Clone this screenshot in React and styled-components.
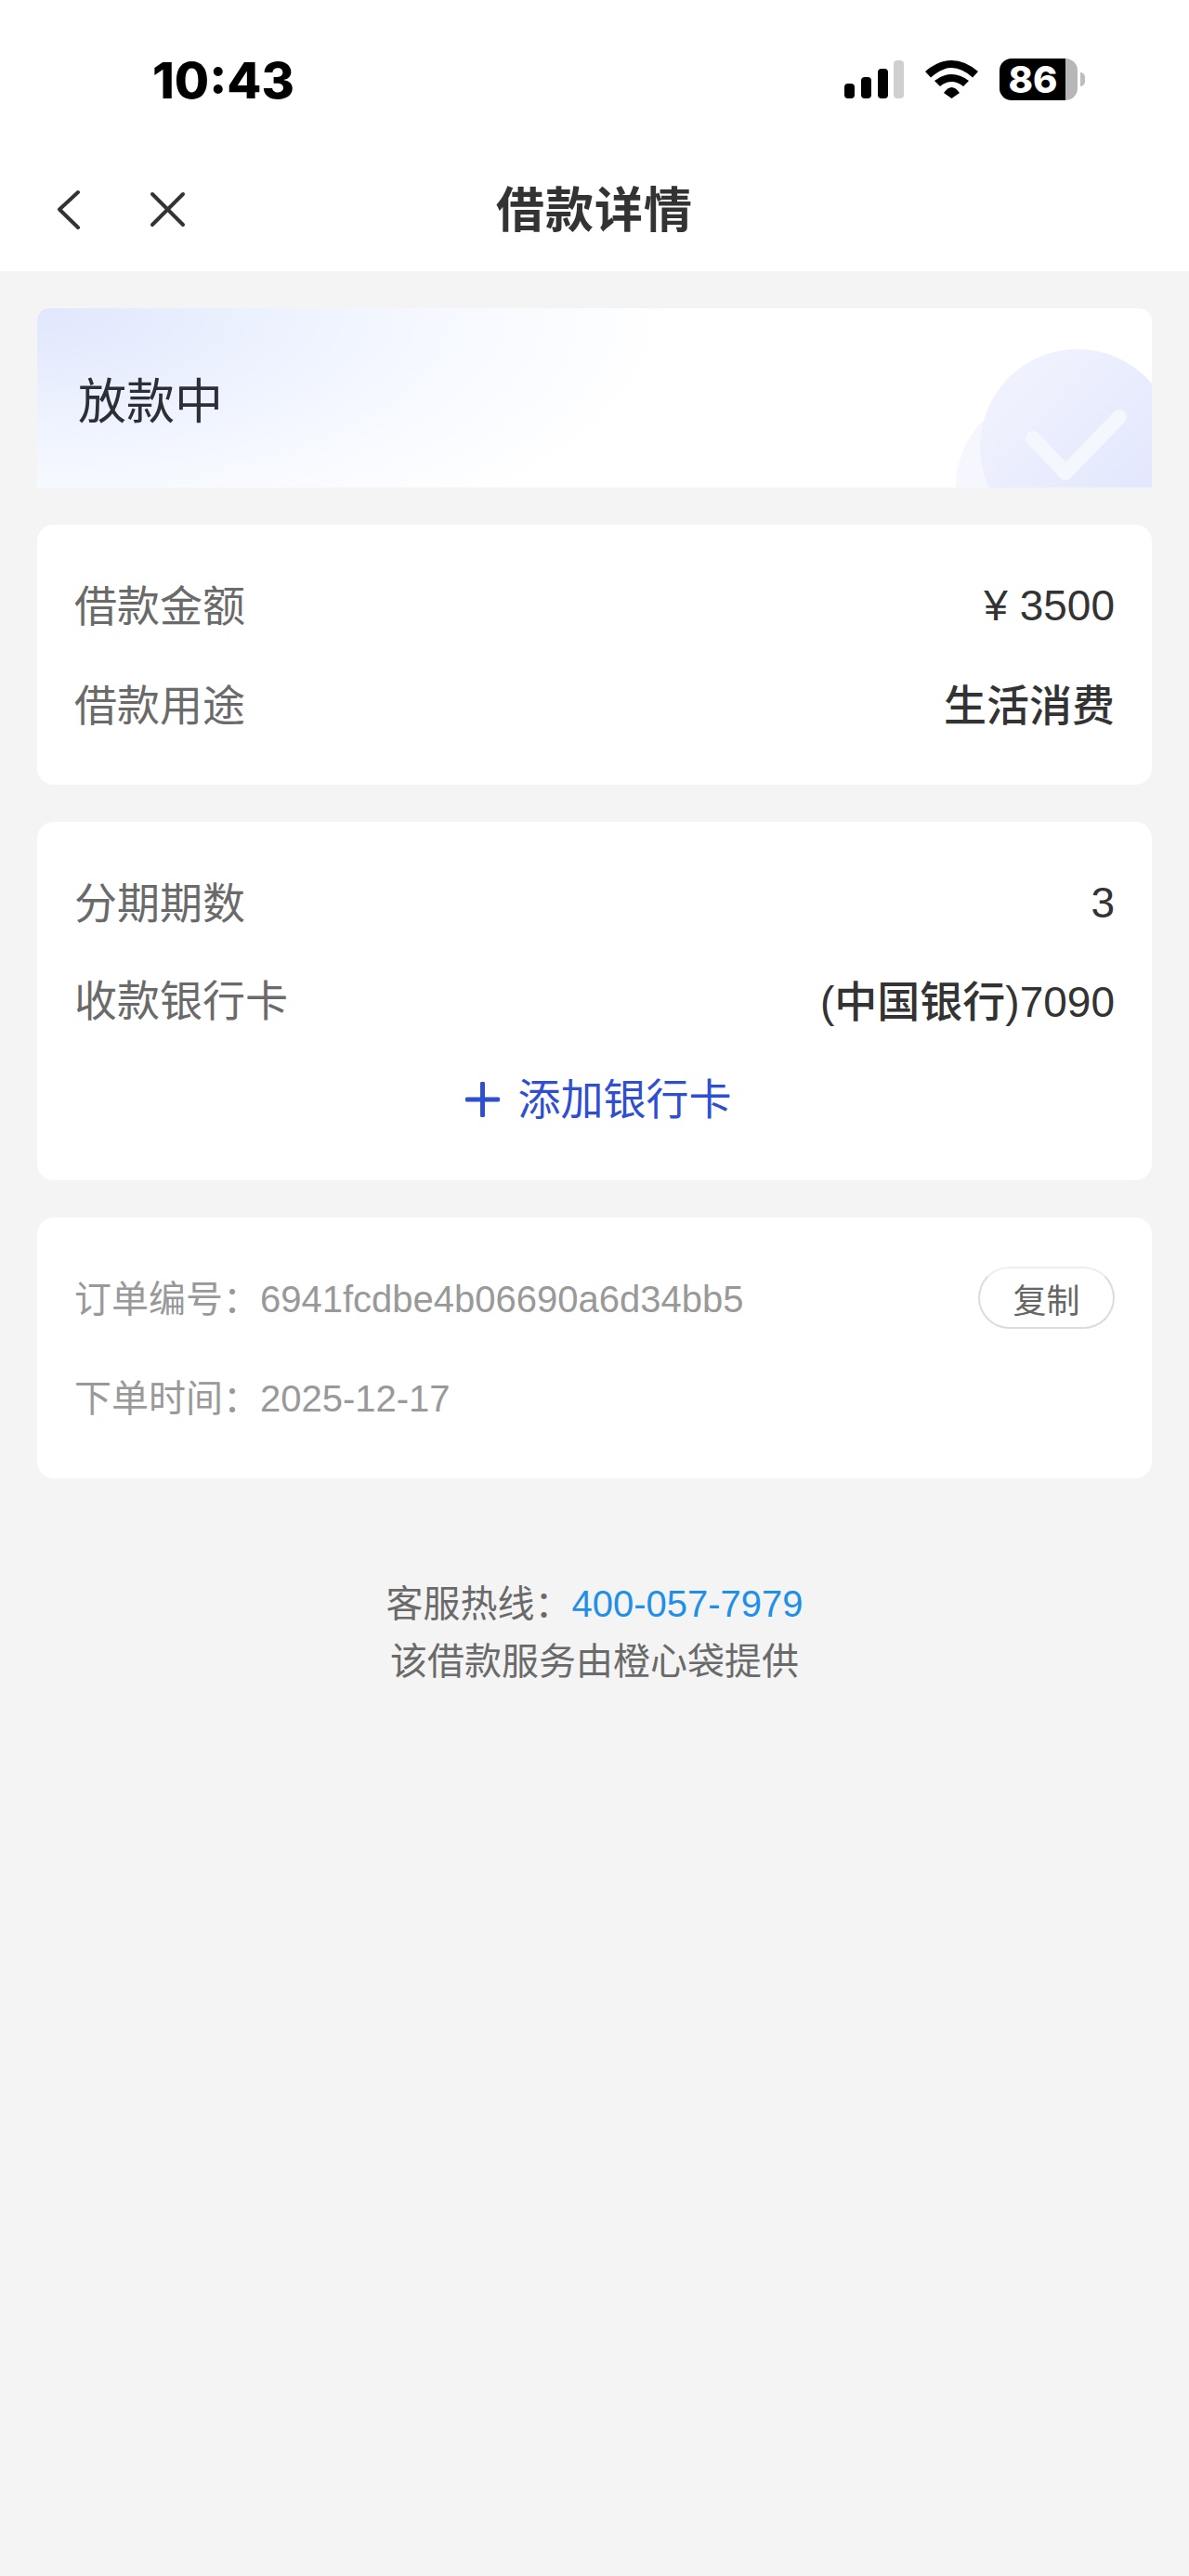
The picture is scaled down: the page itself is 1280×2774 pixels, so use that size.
import React from 'react';
import styled, { createGlobalStyle } from 'styled-components';

const GlobalStyle = createGlobalStyle`
  html, body {
    margin: 0;
    padding: 0;
    background: #f4f4f4;
  }
  body {
    font-family: "Liberation Sans", "Noto Sans CJK SC", sans-serif;
  }
`;

const Page = styled.div`
  width: 1280px;
  height: 2774px;
  background: #f4f4f4;
  overflow: hidden;
`;

const Header = styled.header`
  background: #fff;
  height: 292px;
`;

const StatusBar = styled.div`
  height: 170px;
  display: flex;
  justify-content: space-between;
  align-items: flex-start;
  padding: 57px 112px 0 164px;
  box-sizing: border-box;
`;

const Clock = styled.div`
  font-family: Inter, "Liberation Sans", sans-serif;
  font-size: 54px;
  line-height: 60px;
  font-weight: 800;
  color: #000;
`;

const StatusIcons = styled.div`
  display: flex;
  align-items: center;
  gap: 23px;
  padding-top: 6px;
`;

const Battery = styled.div`
  position: relative;
  width: 84px;
  height: 45px;
  margin-right: 8px;
  border-radius: 13px;
  background: linear-gradient(90deg, #000 0 85%, #b7b7b7 85% 100%);
  color: #fff;
  font-family: Inter, "Liberation Sans", sans-serif;
  font-size: 40px;
  line-height: 45px;
  font-weight: 800;
  text-align: center;
  padding-right: 12px;
  box-sizing: border-box;

  &::after {
    content: '';
    position: absolute;
    right: -8px;
    top: 15px;
    width: 5px;
    height: 15px;
    border-radius: 0 5px 5px 0;
    background: #bdbdbd;
  }
`;

const NavBar = styled.div`
  height: 122px;
  display: grid;
  grid-template-columns: 1fr auto 1fr;
  align-items: start;
  padding-left: 60px;
  padding-right: 60px;
`;

const NavButtons = styled.div`
  display: flex;
  align-items: center;
  gap: 73px;
  padding-top: 34px;
`;

const Title = styled.h1`
  margin: 0;
  font-family: "Noto Sans CJK SC", sans-serif;
  font-size: 52px;
  line-height: 106px;
  font-weight: 700;
  color: #333;
  letter-spacing: 1px;
`;

const Content = styled.main`
  padding: 40px 40px 0;
  display: flex;
  flex-direction: column;
  gap: 40px;
`;

const StatusCard = styled.section`
  position: relative;
  height: 193px;
  border-radius: 14px 14px 0 0;
  overflow: hidden;
  display: flex;
  align-items: center;
  padding: 0 44px;
  background:
    radial-gradient(ellipse 680px 290px at 0 0, #e0e7fd 0%, #ebf0fe 32%, #f5f8ff 62%, rgba(255, 255, 255, 0) 100%),
    #fff;
  box-sizing: border-box;
`;

const StatusText = styled.div`
  font-family: "Noto Sans CJK SC", sans-serif;
  font-size: 52px;
  line-height: 70px;
  color: #2c2f36;
`;

const CheckBadge = styled.svg`
  position: absolute;
  right: 0;
  bottom: 0;
`;

const Card = styled.section`
  background: #fff;
  border-radius: 18px;
  padding: ${(p) => p.$padding};
  box-sizing: border-box;
  height: ${(p) => p.$height}px;
`;

const Row = styled.div`
  height: ${(p) => p.$height}px;
  display: flex;
  align-items: center;
  justify-content: space-between;
`;

const Label = styled.span`
  font-family: "Noto Sans CJK SC", sans-serif;
  font-size: 46px;
  color: #6a6a6a;
  padding-bottom: 6px;
`;

const Value = styled.span`
  font-size: 46px;
  color: #333;
  padding-bottom: ${(p) => p.$lift || 0}px;
`;

const Cjk = styled.span`
  font-family: "Noto Sans CJK SC", sans-serif;
  font-weight: 500;
`;

const AddRow = styled.div`
  height: 109px;
  display: flex;
  align-items: center;
  justify-content: center;
  gap: 20px;
  padding-left: 8px;
`;

const AddLabel = styled.span`
  font-family: "Noto Sans CJK SC", sans-serif;
  font-size: 46px;
  color: #2f4fd0;
  padding-bottom: 8px;
`;

const OrderRow = styled.div`
  height: 107px;
  display: flex;
  align-items: center;
  justify-content: space-between;
`;

const OrderText = styled.span`
  font-size: 40px;
  color: #999;
  font-family: "Noto Sans CJK SC", sans-serif;

  & > b {
    font-family: "Liberation Sans", sans-serif;
    font-weight: 400;
  }
`;

const CopyButton = styled.button`
  width: 147px;
  height: 67px;
  margin-top: 4px;
  border: 2px solid #dcdcdc;
  border-top-color: #eeeeee;
  border-radius: 34px;
  background: #fff;
  font-family: "Noto Sans CJK SC", sans-serif;
  font-size: 36px;
  color: #666;
  padding: 0;
`;

const Footer = styled.footer`
  margin-top: 103px;
  text-align: center;
  font-family: "Noto Sans CJK SC", sans-serif;
  font-size: 40px;
  line-height: 59px;
  color: #6a6a6a;
`;

const Phone = styled.span`
  font-family: "Liberation Sans", sans-serif;
  color: #1f8fe8;
`;

const SignalIcon = () => (
  <svg width="64" height="41" viewBox="0 0 64 41">
    <rect x="0" y="25" width="11" height="16" rx="4" fill="#000" />
    <rect x="18" y="18" width="11" height="23" rx="4" fill="#000" />
    <rect x="36" y="9" width="11" height="32" rx="4" fill="#000" />
    <rect x="53" y="0" width="11" height="41" rx="4" fill="#cfcfcf" />
  </svg>
);

const WifiIcon = () => (
  <svg width="57" height="41" viewBox="0 0 57 41">
    <path d="M0 12 Q28.5 -12 57 12 L51 18.5 Q28.5 -2.5 6 18.5 Z" fill="#000" />
    <path d="M10 22 Q28.5 8 47 22 L41 28 Q28.5 18 16 28 Z" fill="#000" />
    <path d="M20 35 Q28.5 23 37 35 L28.5 41 Z" fill="#000" />
  </svg>
);

const BackIcon = () => (
  <svg width="27" height="43" viewBox="0 0 27 43" fill="none" stroke="#333" strokeWidth="4" strokeLinecap="round" strokeLinejoin="round">
    <path d="M24 3 L4 21.5 L24 41" />
  </svg>
);

const CloseIcon = () => (
  <svg width="41" height="41" viewBox="0 0 41 41" fill="none" stroke="#333" strokeWidth="4" strokeLinecap="round">
    <path d="M4 4 L37 37 M37 4 L4 37" />
  </svg>
);

const PlusIcon = () => (
  <svg width="37" height="38" viewBox="0 0 37 38" fill="none" stroke="#2f4fd0" strokeWidth="5" strokeLinecap="round">
    <path d="M18.5 2 V36 M2 19 H35" />
  </svg>
);

export default function App() {
  return (
    <Page lang="zh-CN">
      <GlobalStyle />
      <Header>
        <StatusBar>
          <Clock>10:43</Clock>
          <StatusIcons>
            <SignalIcon />
            <WifiIcon />
            <Battery>86</Battery>
          </StatusIcons>
        </StatusBar>
        <NavBar>
          <NavButtons>
            <BackIcon />
            <CloseIcon />
          </NavButtons>
          <Title>借款详情</Title>
        </NavBar>
      </Header>
      <Content>
        <StatusCard>
          <StatusText>放款中</StatusText>
          <CheckBadge width="212" height="150" viewBox="0 0 212 150">
            <defs>
              <linearGradient id="badge" x1="0" y1="0" x2="1" y2="1">
                <stop offset="0" stopColor="#f4f4fe" />
                <stop offset="1" stopColor="#dde4fd" />
              </linearGradient>
            </defs>
            <circle cx="102" cy="149" r="101" fill="#f6f7fe" />
            <circle cx="132" cy="106" r="105" fill="url(#badge)" />
            <path d="M84 97 L119 134 L177 74" fill="none" stroke="#f5f7fe" strokeWidth="16" strokeLinecap="round" strokeLinejoin="round" />
          </CheckBadge>
        </StatusCard>

        <Card $height={280} $padding="33px 40px">
          <Row $height={107}><Label>借款金额</Label><Value>¥ 3500</Value></Row>
          <Row $height={107}><Label>借款用途</Label><Value $lift={6}><Cjk>生活消费</Cjk></Value></Row>
        </Card>

        <Card $height={386} $padding="34.5px 40px 0">
          <Row $height={105}><Label>分期期数</Label><Value>3</Value></Row>
          <Row $height={105}><Label>收款银行卡</Label><Value $lift={4}>(<Cjk>中国银行</Cjk>)7090</Value></Row>
          <AddRow><PlusIcon /><AddLabel>添加银行卡</AddLabel></AddRow>
        </Card>

        <Card $height={281} $padding="31px 40px">
          <OrderRow>
            <OrderText>订单编号：<b>6941fcdbe4b06690a6d34bb5</b></OrderText>
            <CopyButton>复制</CopyButton>
          </OrderRow>
          <OrderRow>
            <OrderText>下单时间：<b>2025-12-17</b></OrderText>
          </OrderRow>
        </Card>
      </Content>
      <Footer>
        <div>客服热线：<Phone>400-057-7979</Phone></div>
        <div>该借款服务由橙心袋提供</div>
      </Footer>
    </Page>
  );
}
